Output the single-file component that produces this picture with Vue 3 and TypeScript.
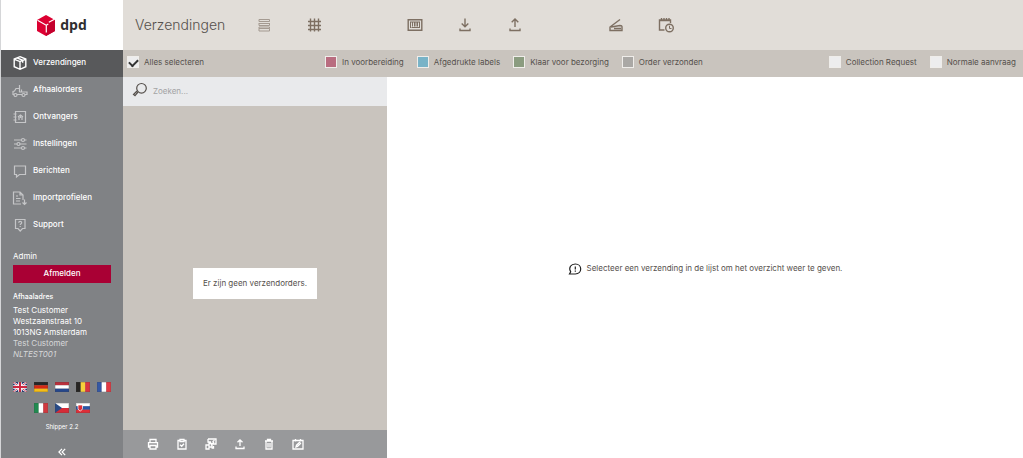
<script setup lang="ts">
import { ref } from 'vue'

interface NavItem { id: string; label: string }
interface Filter { id: string; label: string; color: string }

const nav: NavItem[] = [
  { id: 'parcel', label: 'Verzendingen' },
  { id: 'truck', label: 'Afhaalorders' },
  { id: 'book', label: 'Ontvangers' },
  { id: 'sliders', label: 'Instellingen' },
  { id: 'message', label: 'Berichten' },
  { id: 'import', label: 'Importprofielen' },
  { id: 'support', label: 'Support' },
]
const active = ref('parcel')

const statuses: Filter[] = [
  { id: 'prep', label: 'In voorbereiding', color: 'pink' },
  { id: 'printed', label: 'Afgedrukte labels', color: 'blue' },
  { id: 'ready', label: 'Klaar voor bezorging', color: 'green' },
  { id: 'sent', label: 'Order verzonden', color: 'grey' },
]
const kinds: Filter[] = [
  { id: 'collection', label: 'Collection Request', color: 'plain' },
  { id: 'normal', label: 'Normale aanvraag', color: 'plain' },
]
const flagRows: string[][] = [
  ['English', 'Deutsch', 'Nederlands', 'Belgisch', 'Français'],
  ['Italiano', 'Čeština', 'Slovenčina'],
]
const allSelected = ref(true)
const query = ref('')
</script>

<template>
  <div class="app">
    <aside class="sidebar">
      <a class="logo" href="#" aria-label="dpd">
        <svg class="cube" viewBox="0 0 18 21" aria-hidden="true">
          <path d="M9 0 18 5v11l-9 5-9-5V5z" fill="#dc0032" />
          <path d="M9 10.300 18 5.300V16l-9 5z" fill="#c4002d" />
          <path d="M.5 5.300 9.300 10.300v7.200M9.300 10.300l2-1.200M11.800 7.200l5.700-3" fill="none" stroke="#fff" stroke-width="1.200" />
        </svg>
        <span>dpd</span>
      </a>
      <nav class="nav">
        <a v-for="item in nav" :key="item.id" href="#" :class="['nav-item', { active: active === item.id }]" @click.prevent="active = item.id">
          <svg viewBox="0 0 16 16" aria-hidden="true">
            <template v-if="item.id === 'parcel'">
              <path class="bold" d="M8 1.700 13.800 4v7.700L8 14.300 2.200 11.700V4zM2.500 4.300 8 6.600l5.500-2.300M8 6.600v7.500M5 2.900l5.700 2.400v2.500" />
            </template>
            <template v-else-if="item.id === 'truck'">
              <path d="M5 12.500h5M13 12.500h2V10H7.500V3M7.500 10V6.500H4L2.500 9 1 9.500v3h1M9.500 10V7.500" />
              <circle cx="3.500" cy="13" r="1.500" /><circle cx="11.500" cy="13" r="1.500" />
            </template>
            <template v-else-if="item.id === 'book'">
              <path d="M3.500 2.500h10v11h-10zM1.500 5h3M1.500 8h3M1.500 11h3M6 8l2.500-2L11 8M7 8v3M10 8v3M8.500 7v2" />
            </template>
            <template v-else-if="item.id === 'sliders'">
              <path d="M2 4h7.500M12.500 4h2M2 8h3M8 8h6.500M2 12h7.500M12.500 12h2" />
              <circle cx="11" cy="4" r="1.500" /><circle cx="6.500" cy="8" r="1.500" /><circle cx="11" cy="12" r="1.500" />
            </template>
            <path v-else-if="item.id === 'message'" d="M2.500 3h11v8.500H7.500L4.500 14v-2.500h-2z" />
            <path v-else-if="item.id === 'import'" d="M9 14H1.500V2H8l3 3v5M8 2v3h3M4 6h2M4 8.500h4.500M4 11h4M12.500 9.500v5M10.500 12.500l2 2 2-2" />
            <template v-else>
              <path d="M3.500 2.500h9.500v9h-2.500L8.200 14 6 11.500H3.500zM6.700 5.800c0-2 3-2 3 0 0 1-1.500 1-1.500 2.200M8.200 9v1" />
            </template>
          </svg>
          <span>{{ item.label }}</span>
        </a>
      </nav>
      <section class="account">
        <p class="user">Admin</p>
        <button type="button" class="logout">Afmelden</button>
        <h2>Afhaaladres</h2>
        <address>
          Test Customer<br>Westzaanstraat 10<br>1013NG Amsterdam<br>
          <span class="dim">Test Customer</span><br><em class="dim">NLTEST001</em>
        </address>
      </section>
      <div class="flags">
        <div v-for="(row, index) in flagRows" :key="index" class="flag-row">
          <button v-for="name in row" :key="name" type="button" :aria-label="name">
            <svg viewBox="0 0 14 10" aria-hidden="true">
              <template v-if="name === 'English'">
                <path fill="#263a78" d="M0 0h14v10H0z" />
                <path d="m0 0 14 10M14 0 0 10" stroke="#fff" stroke-width="2.200" />
                <path d="m0 0 14 10M14 0 0 10" stroke="#ce2740" stroke-width=".8" />
                <path d="M7 0v10M0 5h14" stroke="#fff" stroke-width="3.600" />
                <path d="M7 0v10M0 5h14" stroke="#ce2740" stroke-width="2" />
              </template>
              <template v-else-if="name === 'Deutsch'">
                <path fill="#262626" d="M0 0h14v3.300H0z" /><path fill="#d62812" d="M0 3.300h14v3.400H0z" /><path fill="#f4bd18" d="M0 6.700h14V10H0z" />
              </template>
              <template v-else-if="name === 'Nederlands'">
                <path fill="#b9303c" d="M0 0h14v3.300H0z" /><path fill="#fff" d="M0 3.300h14v3.400H0z" /><path fill="#25478c" d="M0 6.700h14V10H0z" />
              </template>
              <template v-else-if="name === 'Belgisch'">
                <path fill="#262422" d="M0 0h4.700v10H0z" /><path fill="#f7d03b" d="M4.700 0h4.600v10H4.700z" /><path fill="#da3540" d="M9.300 0H14v10H9.300z" />
              </template>
              <template v-else-if="name === 'Français'">
                <path fill="#3558a5" d="M0 0h4.700v10H0z" /><path fill="#fff" d="M4.700 0h4.600v10H4.700z" /><path fill="#e33a43" d="M9.300 0H14v10H9.300z" />
              </template>
              <template v-else-if="name === 'Italiano'">
                <path fill="#218b50" d="M0 0h4.700v10H0z" /><path fill="#fff" d="M4.700 0h4.600v10H4.700z" /><path fill="#d2393f" d="M9.300 0H14v10H9.300z" />
              </template>
              <template v-else-if="name === 'Čeština'">
                <path fill="#fff" d="M0 0h14v5H0z" /><path fill="#d62b37" d="M0 5h14v5H0z" /><path fill="#284b87" d="m0 0 7 5-7 5z" />
              </template>
              <template v-else>
                <path fill="#fff" d="M0 0h14v3.300H0z" /><path fill="#2856a8" d="M0 3.300h14v3.400H0z" /><path fill="#df2e38" d="M0 6.700h14V10H0z" />
                <path fill="#df2e38" stroke="#fff" stroke-width=".7" d="M2 2h4.500v3.500Q6 7.500 4.200 8 2.500 7.500 2 5.500z" />
              </template>
              <path d="M.3.300h13.400v9.400H.3z" fill="none" stroke="#444" stroke-opacity=".4" stroke-width=".6" />
            </svg>
          </button>
        </div>
      </div>
      <p class="version">Shipper 2.2</p>
      <button type="button" class="collapse" aria-label="Menu inklappen">
        <svg viewBox="0 0 8 8" aria-hidden="true"><path d="M4 .8.900 4 4 7.200M7.200.800 4.100 4l3.100 3.200" /></svg>
      </button>
    </aside>

    <div class="workspace">
      <header class="header">
        <h1>Verzendingen</h1>
        <div class="tools">
          <div class="tool-group">
            <button type="button" aria-label="Lijst" class="faded">
              <svg viewBox="0 0 16 16"><path d="M3 2.500h10.500v2H3zM3 6.500h10.500M3 6v2.500h10.500V6M3 10h10.500v1.500H3zM3 11.500V14h10.500v-2.500" /></svg>
            </button>
            <button type="button" aria-label="Raster">
              <svg viewBox="0 0 16 16"><path class="thick" d="M4.500 1.500v13M8.500 1.500v13M12.500 1.500v13M2 4.500h13M2 8.500h13M2 12.500h13" /></svg>
            </button>
          </div>
          <div class="tool-group">
            <button type="button" aria-label="Barcode">
              <svg viewBox="0 0 16 16"><path class="thick" d="M1.200 2.700h13.600v10.600H1.200z" /><path d="M3.500 5v6M5.500 5v4.500M7.500 5v4.500M9 5v4.500M10.500 5v4.500M12.500 5v6M4.500 10.500h8M3 5h10" /></svg>
            </button>
            <button type="button" aria-label="Downloaden">
              <svg viewBox="0 0 16 16"><path class="thick" d="M8 1.500v8M4.700 6.500 8 9.800l3.300-3.300M3 11.500v2h10v-2" /></svg>
            </button>
            <button type="button" aria-label="Uploaden">
              <svg viewBox="0 0 16 16"><path class="thick" d="M8 10V2M4.700 5.300 8 2l3.300 3.300M3 11.500v2h10v-2" /></svg>
            </button>
          </div>
          <div class="tool-group">
            <button type="button" aria-label="Scannen">
              <svg viewBox="0 0 16 16"><path class="thick" d="M12 2.500 2 10v3.500h12V9.500q0-1-2-1L3 10M6 11.500h7" /></svg>
            </button>
            <button type="button" aria-label="Planning">
              <svg viewBox="0 0 16 16"><path class="thick" d="M6.500 13H1.500V3h11v3M1.500 3.500h11M3.500 1v3M6 1v3M8.500 1v3M11 1v3" /><circle class="thick" cx="11.500" cy="11" r="3.800" /><path d="M11.500 8.700v2.800h2" /></svg>
            </button>
          </div>
        </div>
      </header>

      <div class="filters">
        <label class="all"><input v-model="allSelected" type="checkbox">Alles selecteren</label>
        <div class="filter-group">
          <label v-for="s in statuses" :key="s.id"><input type="checkbox" :class="s.color">{{ s.label }}</label>
        </div>
        <div class="filter-group kinds">
          <label v-for="k in kinds" :key="k.id"><input type="checkbox" :class="k.color">{{ k.label }}</label>
        </div>
      </div>

      <div class="content">
        <section class="list">
          <label class="search">
            <svg viewBox="0 0 16 16" aria-hidden="true"><circle cx="9.500" cy="6.300" r="4.800" /><path d="M6 10 3 13.700 1.500 12.500 5 9" /></svg>
            <input v-model="query" type="text" placeholder="Zoeken..." aria-label="Zoeken">
          </label>
          <div class="list-body"><p>Er zijn geen verzendorders.</p></div>
          <footer class="actions">
            <button type="button" aria-label="Afdrukken">
              <svg viewBox="0 0 12 12"><path d="M3 4.500v-3h6v3M3 9H1.500V4.700h9V9H9M3 7.500h6v3.500H3z" /></svg>
            </button>
            <button type="button" aria-label="Bevestigen">
              <svg viewBox="0 0 12 12"><path d="M4 2.500H2V11h8V2.500H8M4 1.500h4v2H4zM4 6.700 5.700 8.300 8 5.800" /></svg>
            </button>
            <button type="button" aria-label="Koppelen">
              <svg viewBox="0 0 12 12"><path d="M3 1h8v5H8M3 1v3h3M7.500 3.700l2-1.500M1 7h3v4H1zM4 9h3V5.500H4V7M6 7.500l3-3.500M6.500 10h2V8" /></svg>
            </button>
            <button type="button" aria-label="Exporteren">
              <svg viewBox="0 0 12 12"><path d="M6 8V2M3.500 4.300 6 1.800l2.500 2.500M2 8.500v2h8v-2" /></svg>
            </button>
            <button type="button" aria-label="Verwijderen">
              <svg viewBox="0 0 12 12"><path d="M2 3h8M4.500 3V1.500h3V3M3 3.500V11h6V3.500M5 5v4.500M7 5v4.500" /></svg>
            </button>
            <button type="button" aria-label="Bewerken">
              <svg viewBox="0 0 12 12"><path d="M1 2.500h10V11H1zM3.500 1v2.500M8.500 1v2.500M4 9l.5-1.800L7.500 4.500l1 1-3 2.900z" /></svg>
            </button>
          </footer>
        </section>
        <main class="detail">
          <p>
            <svg viewBox="0 0 14 14" aria-hidden="true"><path d="M7.300 12H1.500L2.700 9.800C.2 5.500 3 2 7.300 2c7.200 0 7.200 10 0 10z" /><path d="M7.300 4.500v3M7.300 8.500v1.200" /></svg>
            <span>Selecteer een verzending in de lijst om het overzicht weer te geven.</span>
          </p>
        </main>
      </div>
    </div>
  </div>
</template>

<style>
body { margin: 0; }
</style>

<style scoped>
* { box-sizing: border-box; }
p, h1, h2 { margin: 0; font-weight: 400; }
button { padding: 0; border: 0; background: none; color: inherit; font: inherit; cursor: pointer; }
a { color: inherit; text-decoration: none; }
svg { display: block; flex: none; fill: none; stroke: currentColor; }
.app { display: flex; min-height: 100vh; font: 8px/11px Inter, "Open Sans", sans-serif; color: #55504c; background: #fff; }
.sidebar { display: flex; flex: 0 0 123px; flex-direction: column; color: #fff; background: #808285; border-left: 1px solid #d5d6d8; }
.logo { display: flex; align-items: center; justify-content: center; gap: 5px; height: 50px; background: #fff; color: #302e2f; font: 700 14px/20px "Open Sans", sans-serif; }
.cube { width: 18px; height: 21px; stroke: none; }
.nav-item { display: flex; align-items: center; gap: 5px; height: 27px; padding: 0 0 2px 11px; font-weight: 500; }
.nav-item svg { width: 16px; height: 16px; color: #c5c6c8; stroke-width: 1.2; }
.nav-item.active { background: #58595b; }
.nav-item.active svg { color: #fff; }
.bold { stroke-width: 1.4; }
.account { padding: 12px 12px 0; }
.logout { display: block; width: 100%; height: 18px; margin: 3px 0 8px; padding-bottom: 1px; background: #a90034; font-weight: 500; }
.account h2 { font: inherit; font-size: 7px; font-weight: 500; margin-bottom: 3px; }
address { font-style: normal; }
.dim { color: #d6d7d8; }
.flags { display: grid; gap: 11px; margin-top: 22px; }
.flag-row { display: flex; justify-content: center; gap: 7px; }
.flag-row svg { width: 14px; height: 10px; stroke: none; }
.version { margin-top: 8px; text-align: center; font-size: 6px; }
.collapse { align-self: center; margin: auto 0 2px; }
.collapse svg { width: 8px; height: 8px; stroke-width: 1.2; }

.workspace { display: flex; flex: 1; min-width: 0; flex-direction: column; }
.header { display: flex; align-items: center; height: 50px; padding-left: 12px; background: #e1ddd8; }
.header h1 { flex: 0 0 119px; font-size: 14px; line-height: 20px; font-weight: 300; }
.tools { display: flex; gap: 81px; color: #7d6f62; }
.tool-group { display: flex; gap: 30px; }
.tools button { display: grid; width: 20px; height: 20px; place-items: center; }
.tools svg { width: 16px; height: 16px; }
.thick { stroke-width: 1.4; }
.faded { opacity: .6; }
.filters { display: flex; align-items: center; height: 27px; padding: 0 7px 3px 4px; background: #c9c4be; }
.filters label { display: flex; align-items: center; gap: 5px; white-space: nowrap; }
.filters .all { flex: 0 0 198px; }
.filter-group { display: flex; gap: 13px; }
.kinds { margin-left: auto; }
.filters input { display: grid; width: 12px; height: 12px; margin: 0; place-items: center; appearance: none; border: 1px solid #efedea; background: #ededee; }
.filters input.pink { background: #b96d80; }
.filters input.blue { background: #79b3c7; }
.filters input.green { background: #8b9c80; }
.filters input.grey { background: #aaa8a5; }
.filters input:checked::before { content: ""; width: 7px; height: 4px; border: solid #333; border-width: 0 0 2px 2px; transform: rotate(-45deg); }
.content { display: flex; flex: 1; }
.list { display: flex; flex: 0 0 264px; flex-direction: column; background: #c9c4be; }
.search { display: flex; align-items: center; gap: 5px; height: 29px; padding: 0 9px; background: #e9eaec; }
.search svg { width: 16px; height: 16px; margin-bottom: 3px; stroke-width: 1.2; }
.search input { flex: 1; min-width: 0; padding: 0; border: 0; outline: 0; background: none; color: inherit; font: inherit; }
.search input::placeholder { color: #a3a3a4; opacity: 1; }
.list-body { display: flex; flex: 1; align-items: center; justify-content: center; padding-top: 30px; }
.list-body p { padding: 10px; background: #fff; }
.actions { display: flex; align-items: center; gap: 17px; height: 28px; padding-left: 24px; color: #fff; background: #98999b; }
.actions svg { width: 12px; height: 12px; stroke-width: 1.3; }
.detail { display: flex; flex: 1; align-items: center; justify-content: center; padding-top: 2px; }
.detail p { display: flex; align-items: center; gap: 5px; }
.detail svg { width: 14px; height: 14px; color: #222; stroke-width: 1.2; }
</style>
